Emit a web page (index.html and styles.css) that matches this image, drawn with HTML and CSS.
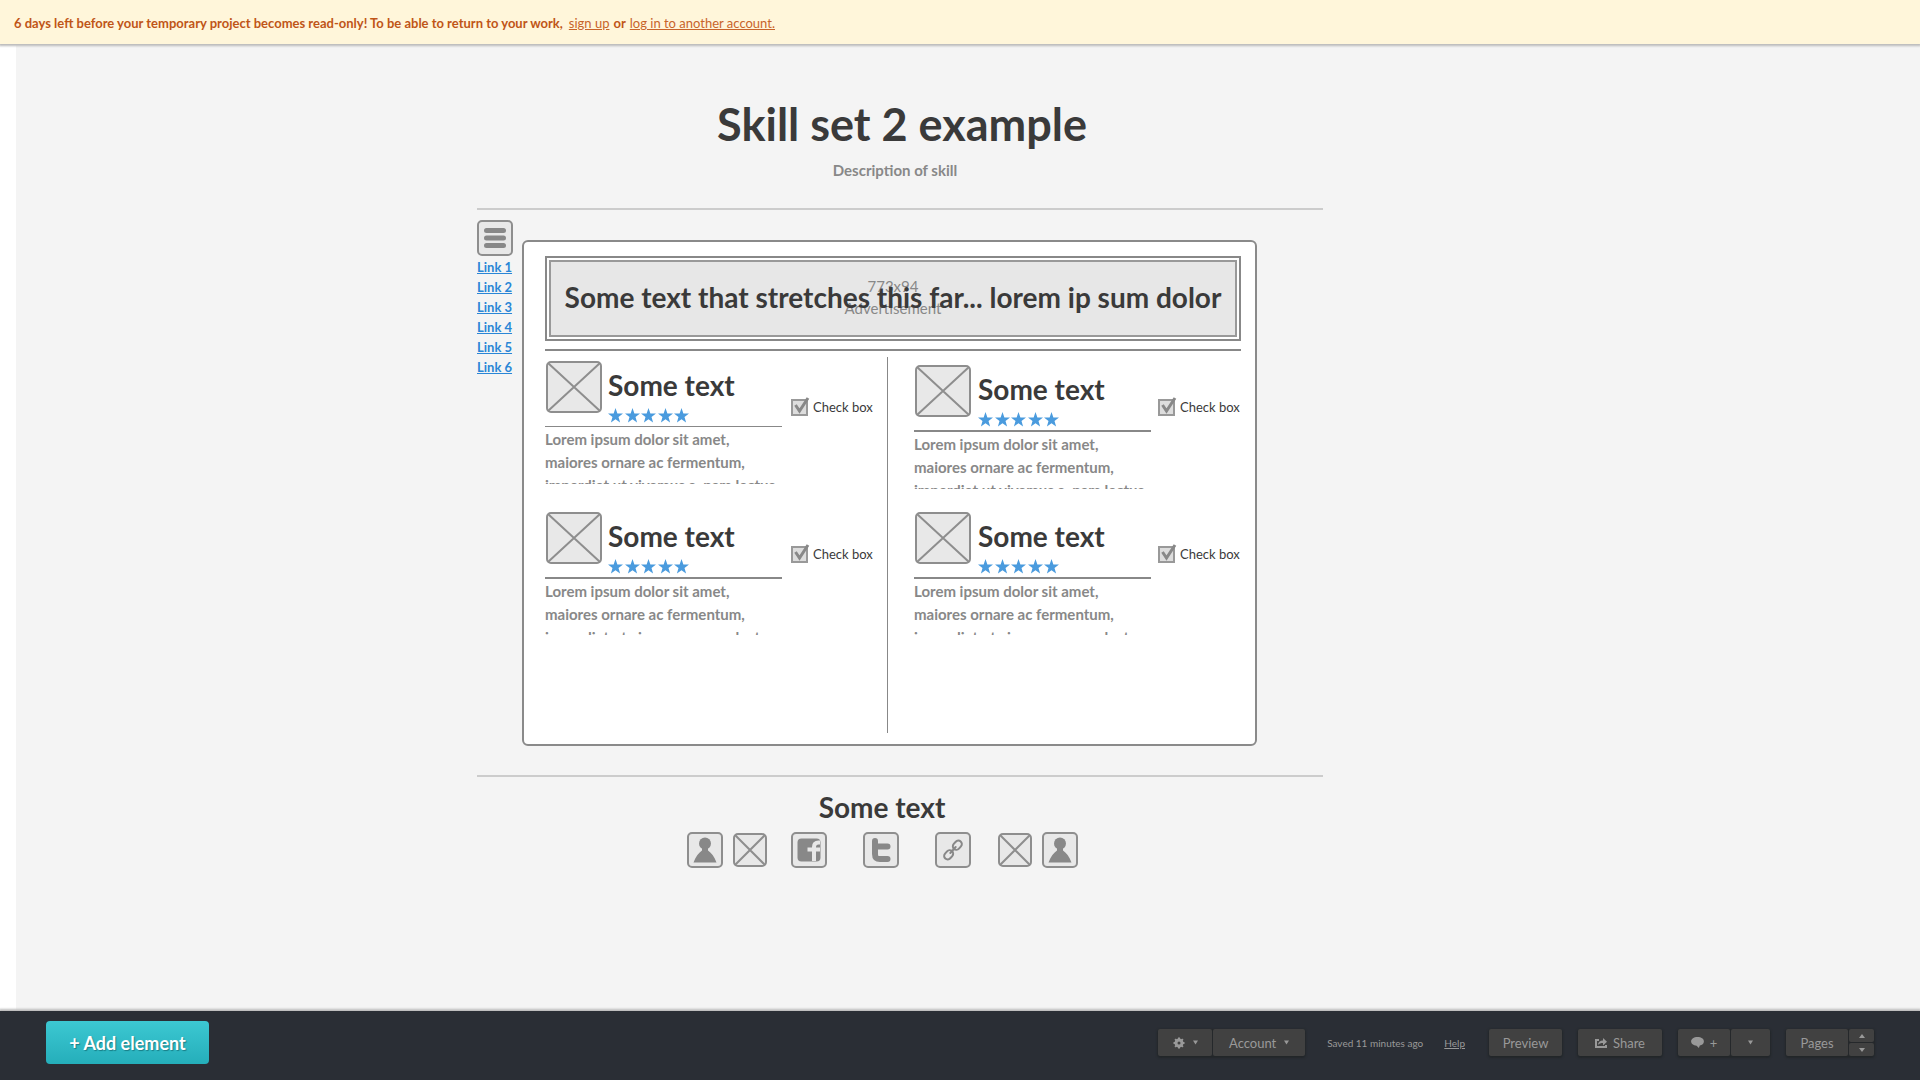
FILE: index.html
```html
<!DOCTYPE html>
<html lang="en">
<head>
<meta charset="utf-8">
<title>Skill set 2 example</title>
<link rel="stylesheet" href="styles.css">
</head>
<body>
<svg class="sprite" aria-hidden="true">
  <symbol id="star" viewBox="0 0 16 16"><path d="M8 0l2 5.800 6 .1-4.800 3.700 1.700 5.900L8 12l-4.900 3.500 1.700-5.900L0 5.900l6-.1z"/></symbol>
  <symbol id="tick" viewBox="0 0 20 20"><path d="M4.500 8l4 6L17 1"/></symbol>
  <symbol id="person" viewBox="0 0 32 32"><circle cx="16" cy="9.500" r="6"/><path d="M13 13h6v3.500c3 2 6.500 6 8.500 12h-23c2-6 5.500-10 8.500-12z"/></symbol>
</svg>

<header class="notice">
  <b>6 days left before your temporary project becomes read-only! To be able to return to your work,</b>
  <a class="signup" href="#signup">sign up</a>
  <b>or</b>
  <a href="#login">log in to another account.</a>
</header>

<main class="canvas">
  <div class="frame">
    <div class="intro">
      <h1>Skill set 2 example</h1>
      <p>Description of skill</p>
    </div>

    <div class="body">
      <nav class="menu">
        <button class="tile" type="button" aria-label="Menu">
          <svg width="32" height="32" viewBox="0 0 32 32" aria-hidden="true"><path class="bars" d="M7.500 8.500h17M7.500 16h17M7.500 23.500h17"/></svg>
        </button>
        <a href="#1">Link 1</a>
        <a href="#2">Link 2</a>
        <a href="#3">Link 3</a>
        <a href="#4">Link 4</a>
        <a href="#5">Link 5</a>
        <a href="#6">Link 6</a>
      </nav>

      <section class="card">
        <div class="ad">
          <div class="ad-inner">
            <p>773x94<br>Advertisement</p>
            <h2>Some text that stretches this far... lorem ip sum dolor</h2>
          </div>
        </div>
        <hr>
        <div class="columns">
          <div class="column column-left">
            <article class="item item-thin">
              <div class="head">
                <svg class="thumb" viewBox="0 0 56 52" aria-hidden="true"><rect x="1" y="1" width="54" height="50" rx="4"/><path d="M2 2l52 48M54 2L2 50"/></svg>
                <div>
                  <h3>Some text</h3>
                  <div class="stars"><svg><use href="#star"/></svg><svg><use href="#star"/></svg><svg><use href="#star"/></svg><svg><use href="#star"/></svg><svg><use href="#star"/></svg></div>
                </div>
              </div>
              <label class="check"><input type="checkbox" checked><svg><use href="#tick"/></svg>Check box</label>
              <p>Lorem ipsum dolor sit amet,<br>maiores ornare ac fermentum,<br>imperdiet ut vivamus a, nam lectus</p>
            </article>
            <article class="item item-short">
              <div class="head">
                <svg class="thumb" viewBox="0 0 56 52" aria-hidden="true"><rect x="1" y="1" width="54" height="50" rx="4"/><path d="M2 2l52 48M54 2L2 50"/></svg>
                <div>
                  <h3>Some text</h3>
                  <div class="stars"><svg><use href="#star"/></svg><svg><use href="#star"/></svg><svg><use href="#star"/></svg><svg><use href="#star"/></svg><svg><use href="#star"/></svg></div>
                </div>
              </div>
              <label class="check"><input type="checkbox" checked><svg><use href="#tick"/></svg>Check box</label>
              <p>Lorem ipsum dolor sit amet,<br>maiores ornare ac fermentum,<br>imperdiet ut vivamus a, nam lectus</p>
            </article>
          </div>
          <div class="column column-right">
            <article class="item">
              <div class="head">
                <svg class="thumb" viewBox="0 0 56 52" aria-hidden="true"><rect x="1" y="1" width="54" height="50" rx="4"/><path d="M2 2l52 48M54 2L2 50"/></svg>
                <div>
                  <h3>Some text</h3>
                  <div class="stars"><svg><use href="#star"/></svg><svg><use href="#star"/></svg><svg><use href="#star"/></svg><svg><use href="#star"/></svg><svg><use href="#star"/></svg></div>
                </div>
              </div>
              <label class="check"><input type="checkbox" checked><svg><use href="#tick"/></svg>Check box</label>
              <p>Lorem ipsum dolor sit amet,<br>maiores ornare ac fermentum,<br>imperdiet ut vivamus a, nam lectus</p>
            </article>
            <article class="item item-short">
              <div class="head">
                <svg class="thumb" viewBox="0 0 56 52" aria-hidden="true"><rect x="1" y="1" width="54" height="50" rx="4"/><path d="M2 2l52 48M54 2L2 50"/></svg>
                <div>
                  <h3>Some text</h3>
                  <div class="stars"><svg><use href="#star"/></svg><svg><use href="#star"/></svg><svg><use href="#star"/></svg><svg><use href="#star"/></svg><svg><use href="#star"/></svg></div>
                </div>
              </div>
              <label class="check"><input type="checkbox" checked><svg><use href="#tick"/></svg>Check box</label>
              <p>Lorem ipsum dolor sit amet,<br>maiores ornare ac fermentum,<br>imperdiet ut vivamus a, nam lectus</p>
            </article>
          </div>
        </div>
      </section>
    </div>

    <footer class="social">
      <h3>Some text</h3>
      <div class="tiles">
        <div class="pair">
          <button class="tile" type="button" aria-label="Profile"><svg width="32" height="32"><use href="#person"/></svg></button>
          <svg class="thumb thumb-small" viewBox="0 0 34 34" aria-hidden="true"><rect x="1" y="1" width="32" height="32" rx="4"/><path d="M2 2l30 30M32 2L2 32"/></svg>
        </div>
        <button class="tile" type="button" aria-label="Facebook"><svg width="32" height="32" viewBox="0 0 32 32"><rect x="4.500" y="4.500" width="23" height="23" rx="4"/><path class="cutout" d="M27 8.500h-1.500c-3 0-4.500 1.500-4.500 4.500v14M14.500 15.500h12.500"/></svg></button>
        <button class="tile" type="button" aria-label="Twitter"><svg width="32" height="32" viewBox="0 0 32 32"><path class="bird" d="M10 7v13c0 3.500 1.500 5 5 5h7.500M10 12.500h12.500"/></svg></button>
        <button class="tile" type="button" aria-label="Copy link"><svg width="32" height="32" viewBox="0 0 32 32"><g class="chain" transform="rotate(-48 16 16)"><rect x="4.500" y="12.500" width="10" height="7" rx="3.500"/><rect x="17.500" y="12.500" width="10" height="7" rx="3.500"/><path d="M12 16h8"/></g></svg></button>
        <div class="pair pair-end">
          <svg class="thumb thumb-small" viewBox="0 0 34 34" aria-hidden="true"><rect x="1" y="1" width="32" height="32" rx="4"/><path d="M2 2l30 30M32 2L2 32"/></svg>
          <button class="tile" type="button" aria-label="Account profile"><svg width="32" height="32"><use href="#person"/></svg></button>
        </div>
      </div>
    </footer>
  </div>
</main>

<div class="toolbar">
  <button class="add" type="button">+ Add element</button>
  <div class="group account">
    <button type="button" aria-label="Settings">
      <svg width="12" height="12" viewBox="0 0 12 12"><circle class="cog" cx="6" cy="6" r="3"/><path class="teeth" d="M6 .5v2M6 9.500v2M.5 6h2M9.500 6h2M2.100 2.100l1.500 1.500M8.400 8.400l1.500 1.500M9.900 2.100L8.400 3.600M3.600 8.400L2.100 9.900"/></svg>
      <svg width="5" height="5" viewBox="0 0 6 5"><path d="M0 0h6L3 5z"/></svg>
    </button>
    <button type="button">Account <svg width="5" height="5" viewBox="0 0 6 5"><path d="M0 0h6L3 5z"/></svg></button>
  </div>
  <span class="saved">Saved 11 minutes ago</span>
  <a class="help" href="#help">Help</a>
  <div class="group preview"><button type="button">Preview</button></div>
  <div class="group share"><button type="button">
    <svg width="12" height="10" viewBox="0 0 12 10"><path d="M0 1h4v2H2v5h8V7h2v3H0zM3 7c0-3 2-4.500 5-4.500V0l4 3.800-4 3.700V5C6 5 4 5.500 3 7z"/></svg>
    Share</button></div>
  <div class="group comment">
    <button type="button" aria-label="Add comment"><svg width="13" height="11" viewBox="0 0 14 12"><path d="M7 0c4 0 7 2 7 4.700S12 9 9.500 9.300L8.500 12 6 9.500C2.500 9.300 0 7.300 0 4.700S3 0 7 0z"/></svg>+</button>
    <button type="button" aria-label="Comment options"><svg width="5" height="5" viewBox="0 0 6 5"><path d="M0 0h6L3 5z"/></svg></button>
  </div>
  <div class="group pages">
    <button type="button">Pages</button>
    <div class="stepper">
      <button type="button" aria-label="Previous page"><svg width="6" height="4" viewBox="0 0 6 4"><path d="M0 4h6L3 0z"/></svg></button>
      <button type="button" aria-label="Next page"><svg width="6" height="4" viewBox="0 0 6 4"><path d="M0 0h6L3 4z"/></svg></button>
    </div>
  </div>
</div>
</body>
</html>
```
FILE: styles.css
```css
* { box-sizing: border-box; }

body {
  margin: 0;
  min-height: 100vh;
  display: flex;
  flex-direction: column;
  background: #fff;
  color: #3a3a3a;
  font-family: Lato, "Noto Sans", sans-serif;
  font-size: 15px;
}

h1, h2, h3, p, hr { margin: 0; }
h1, h2, h3, p, a, label, button, span, b { white-space: nowrap; }
button { margin: 0; padding: 0; border: 0; font: inherit; color: inherit; }
svg { display: block; flex: none; }
.sprite { position: absolute; width: 0; height: 0; }

.notice {
  display: flex;
  align-items: center;
  gap: 4px;
  height: 44px;
  padding: 2px 14px 0;
  background: #fff6da;
  color: #bf5517;
  font-size: 13px;
  box-shadow: 0 1px 2px 1px #bbb;
  position: relative;
}
.notice a { color: #c8642a; }
.notice .signup { padding-left: 2px; }

.canvas {
  flex: 1;
  margin-left: 16px;
  padding: 56px 24px 0 461px;
  background: #f4f4f4;
}
.frame { max-width: 846px; }

.intro {
  height: 110px;
  text-align: center;
  border-bottom: 2px solid #ccc;
}
.intro h1 { font-size: 45px; line-height: 48px; padding-left: 4px; }
.intro p { padding-right: 10px; color: #888; font-weight: 700; line-height: 44px; }

.body {
  display: grid;
  grid-template-columns: 45px minmax(0, 735px);
  padding-bottom: 29px;
  border-bottom: 2px solid #ccc;
}

.menu { display: flex; flex-direction: column; padding-top: 10px; }
.menu a { color: #2a86d6; font-size: 13px; font-weight: 700; line-height: 20px; }
.menu .tile { margin-bottom: 1px; }

.tile {
  display: block;
  flex: none;
  width: 36px;
  height: 36px;
  border: 2px solid #8e8e8e;
  border-radius: 5px;
  background: #e8e8e8;
  fill: #888;
}
.bars { stroke: #888; stroke-width: 5; stroke-linecap: round; }
.bird { fill: none; stroke: #888; stroke-width: 6; stroke-linecap: round; }
.cutout { fill: none; stroke: #e8e8e8; stroke-width: 4; }
.chain { fill: none; stroke: #888; stroke-width: 2; stroke-linecap: round; }

.card {
  margin-top: 30px;
  padding: 14px 14px 11px 21px;
  border: 2px solid #8a8a8a;
  border-radius: 6px;
  background: #fff;
}

.ad { border: 2px solid #888; padding: 2px; }
.ad-inner {
  display: grid;
  place-items: center;
  height: 77px;
  padding-bottom: 3px;
  border: 2px solid #999;
  background: #e7e7e7;
}
.ad-inner > * { grid-area: 1 / 1; }
.ad-inner p { color: #888; line-height: 22px; text-align: center; }
.ad-inner h2 { font-size: 28px; line-height: 32px; }
.card hr { border: 0; height: 2px; margin: 8px 0 6px; background: #888; }

.columns { display: grid; grid-template-columns: 343px 1fr; height: 376px; }
.column { display: flex; flex-direction: column; gap: 23px; }
.column-left { padding-top: 4px; gap: 28px; border-right: 1px solid #888; }
.column-right { padding: 8px 0 0 26px; }

.item { display: grid; grid-template-columns: 237px auto; column-gap: 7px; justify-content: start; align-items: start; }
.column-left .item { column-gap: 9px; }
.head { display: flex; gap: 7px; height: 67px; border-bottom: 2px solid #888; padding-left: 1px; }
.column-left .head { gap: 6px; }
.item-thin .head { height: 66px; border-width: 1px; }
.item p { grid-column: 1 / -1; height: 57px; padding-top: 1px; overflow: hidden; color: #888; font-weight: 700; line-height: 23px; }
.item-short p { height: 56px; }
.head h3, .social h3 { font-size: 28px; line-height: 32px; }
.head h3 { padding-top: 8px; }

.thumb { width: 56px; height: 52px; fill: #e8e8e8; stroke: #8e8e8e; stroke-width: 2; }
.thumb-small { width: 34px; height: 34px; }
.stars { display: flex; justify-content: space-between; width: 81px; padding-top: 7px; }
.stars svg { width: 15px; height: 15px; fill: #4a9bde; }

.check { display: flex; align-items: center; gap: 5px; margin-top: 34px; position: relative; font-size: 13px; line-height: 17px; }
.item-thin .check { margin-top: 38px; }
.check input { appearance: none; width: 17px; height: 17px; margin: 0; border: 2px solid #999; background: #ddd; }
.check svg { position: absolute; left: 0; top: -2px; width: 20px; height: 20px; fill: none; stroke: #888; stroke-width: 3; }

.social { padding-top: 14px; }
.social h3 { text-align: center; padding-right: 36px; }
.tiles { display: flex; justify-content: center; padding: 9px 36px 0 0; gap: 36px; }
.pair { display: flex; align-items: center; gap: 10px; margin-right: -12px; }
.pair-end { margin: 0 0 0 -9px; }

.toolbar {
  display: flex;
  align-items: center;
  height: 69px;
  padding: 0 46px 6px;
  background: #2a2e35;
  color: #999;
  box-shadow: 0 -1px 2px 1px #bbb;
  position: relative;
}
.add {
  width: 163px;
  height: 43px;
  margin-right: auto;
  border-radius: 4px;
  background: linear-gradient(#3cc8d2, #25aeba);
  color: #fff;
  font-size: 18px;
  font-weight: 700;
  text-shadow: 1px 1px 1px #187d86;
}
.group { display: flex; gap: 1px; height: 27px; border-radius: 3px; background: #25282b; box-shadow: 0 1px 2px 1px #222629; fill: #999; font-size: 13px; }
.group button { display: flex; align-items: center; justify-content: center; gap: 6px; background: #414141; border-radius: 2px; flex: 1; }
.account { width: 147px; }
.account button:first-child { flex: none; width: 54px; }
.account button { gap: 8px; }
.cog { fill: none; stroke: #999; stroke-width: 3; }
.teeth { stroke: #999; stroke-width: 2; }
.saved { margin-left: 22px; font-size: 10px; }
.help { margin-left: 21px; font-size: 10px; color: inherit; }
.preview { width: 73px; margin-left: 24px; }
.share { width: 84px; margin-left: 16px; }
.comment { width: 92px; margin-left: 16px; }
.comment button:first-child { flex: none; width: 52px; }
.pages { width: 88px; margin-left: 16px; }
.stepper { display: flex; flex-direction: column; gap: 1px; width: 25px; }
```
